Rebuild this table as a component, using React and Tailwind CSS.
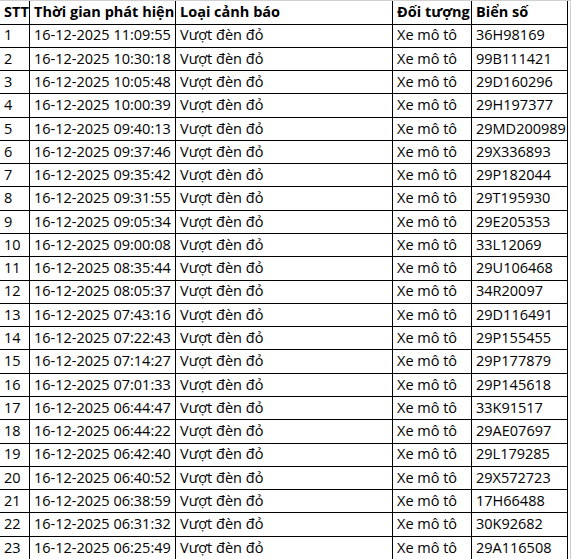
import React from "react";

const rows = [
  ["16-12-2025 11:09:55", "36H98169"],
  ["16-12-2025 10:30:18", "99B111421"],
  ["16-12-2025 10:05:48", "29D160296"],
  ["16-12-2025 10:00:39", "29H197377"],
  ["16-12-2025 09:40:13", "29MD200989"],
  ["16-12-2025 09:37:46", "29X336893"],
  ["16-12-2025 09:35:42", "29P182044"],
  ["16-12-2025 09:31:55", "29T195930"],
  ["16-12-2025 09:05:34", "29E205353"],
  ["16-12-2025 09:00:08", "33L12069"],
  ["16-12-2025 08:35:44", "29U106468"],
  ["16-12-2025 08:05:37", "34R20097"],
  ["16-12-2025 07:43:16", "29D116491"],
  ["16-12-2025 07:22:43", "29P155455"],
  ["16-12-2025 07:14:27", "29P177879"],
  ["16-12-2025 07:01:33", "29P145618"],
  ["16-12-2025 06:44:47", "33K91517"],
  ["16-12-2025 06:44:22", "29AE07697"],
  ["16-12-2025 06:42:40", "29L179285"],
  ["16-12-2025 06:40:52", "29X572723"],
  ["16-12-2025 06:38:59", "17H66488"],
  ["16-12-2025 06:31:32", "30K92682"],
  ["16-12-2025 06:25:49", "29A116508"],
];

const cell = "border border-black pl-[4px] pr-0 py-0 text-left align-middle whitespace-nowrap overflow-hidden";

export default function App() {
  return (
    <div
      className="w-[571px] h-[559px] bg-white overflow-hidden text-black"
      style={{ fontFamily: '"Open Sans", "Liberation Sans", sans-serif' }}
    >
      <div className="h-[1px] bg-[#d0d0d0]" />
      <div className="flex">
        <table className="border-collapse table-fixed w-[568px] ml-[-1px] text-[14.5px] leading-none">
          <colgroup>
            <col className="w-[30px]" />
            <col className="w-[146px]" />
            <col className="w-[217px]" />
            <col className="w-[79px]" />
            <col className="w-[96px]" />
          </colgroup>
          <thead>
            <tr className="h-[23px] font-bold">
              <th className={cell + " border-t-0"}>STT</th>
              <th className={cell + " border-t-0"}>Thời gian phát hiện</th>
              <th className={cell + " border-t-0"}>Loại cảnh báo</th>
              <th className={cell + " border-t-0"}>Đối tượng</th>
              <th className={cell + " border-t-0"}>Biển số</th>
            </tr>
          </thead>
          <tbody>
            {rows.map((r, i) => (
              <tr key={i} className="h-[23px]">
                <td className={cell}>{i + 1}</td>
                <td className={cell}>{r[0]}</td>
                <td className={cell}>Vượt đèn đỏ</td>
                <td className={cell}>Xe mô tô</td>
                <td className={cell}>{r[1]}</td>
              </tr>
            ))}
          </tbody>
        </table>
        <div className="w-[2px]" />
        <div className="w-[1px] h-[559px] bg-[#d0d0d0]" />
      </div>
    </div>
  );
}
